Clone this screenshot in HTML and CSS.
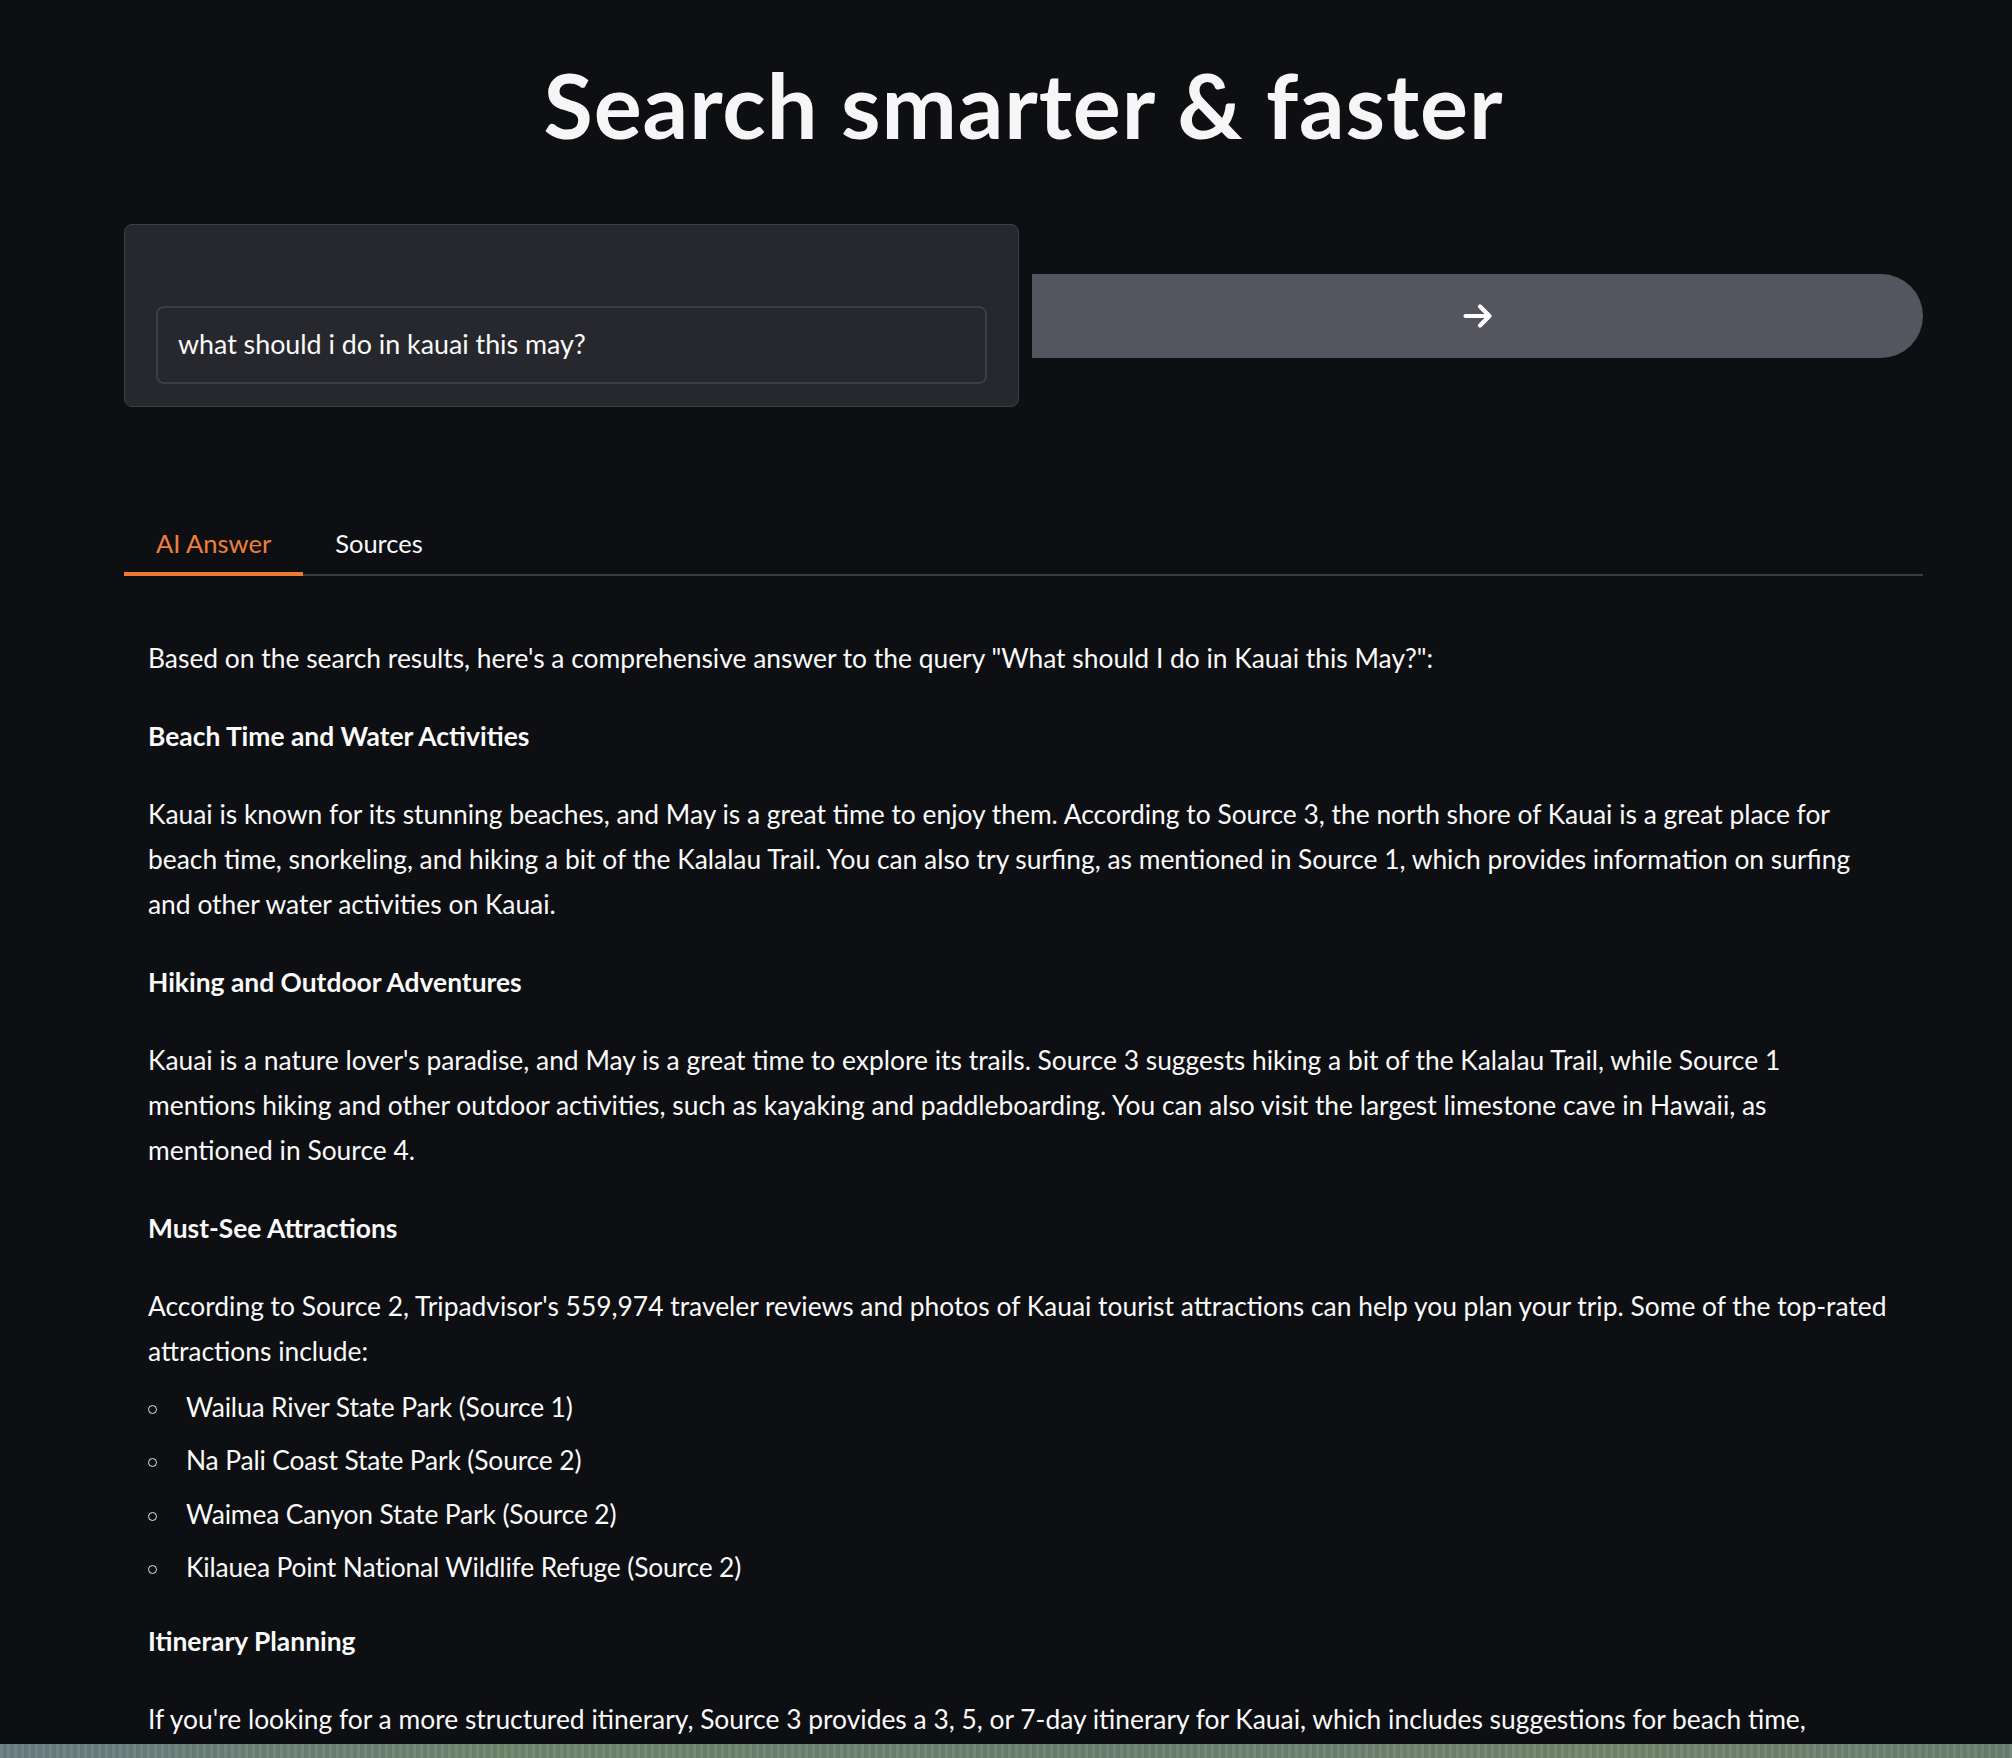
FILE: index.html
```html
<!DOCTYPE html>
<html lang="en">
<head>
<meta charset="utf-8">
<title>Search smarter &amp; faster</title>
<link rel="stylesheet" href="styles.css">
</head>
<body>
<div class="viewport">
  <main class="page">
    <h1 class="title">Search smarter &amp; faster</h1>

    <section class="search-row">
      <div class="search-box">
        <div class="search-input">what should i do in kauai this may?</div>
      </div>
      <button class="search-btn" type="button" aria-label="Search">
        <svg class="arrow" width="32" height="26" viewBox="0 0 32 26" aria-hidden="true">
          <path d="M3.5 13 H27.5 M18 3.5 L27.5 13 L18 22.5" fill="none" stroke="#ffffff" stroke-width="4.2" stroke-linecap="round" stroke-linejoin="round"/>
        </svg>
      </button>
    </section>

    <nav class="tabs">
      <div class="tab active">AI Answer</div>
      <div class="tab">Sources</div>
    </nav>

    <article class="answer">
      <p>Based on the search results, here's a comprehensive answer to the query "What should I do in Kauai this May?":</p>
      <p class="heading">Beach Time and Water Activities</p>
      <p>Kauai is known for its stunning beaches, and May is a great time to enjoy them. According to Source 3, the north shore of Kauai is a great place for<br>beach time, snorkeling, and hiking a bit of the Kalalau Trail. You can also try surfing, as mentioned in Source 1, which provides information on surfing<br>and other water activities on Kauai.</p>
      <p class="heading">Hiking and Outdoor Adventures</p>
      <p>Kauai is a nature lover's paradise, and May is a great time to explore its trails. Source 3 suggests hiking a bit of the Kalalau Trail, while Source 1<br>mentions hiking and other outdoor activities, such as kayaking and paddleboarding. You can also visit the largest limestone cave in Hawaii, as<br>mentioned in Source 4.</p>
      <p class="heading">Must-See Attractions</p>
      <p class="lead">According to Source 2, Tripadvisor's 559,974 traveler reviews and photos of Kauai tourist attractions can help you plan your trip. Some of the top-rated<br>attractions include:</p>
      <ul class="list">
        <li>Wailua River State Park (Source 1)</li>
        <li>Na Pali Coast State Park (Source 2)</li>
        <li>Waimea Canyon State Park (Source 2)</li>
        <li>Kilauea Point National Wildlife Refuge (Source 2)</li>
      </ul>
      <p class="heading">Itinerary Planning</p>
      <p>If you're looking for a more structured itinerary, Source 3 provides a 3, 5, or 7-day itinerary for Kauai, which includes suggestions for beach time,</p>
    </article>
  </main>
</div>
<div class="desktop-strip"></div>
</body>
</html>
```

FILE: styles.css
```css
html, body {
  margin: 0;
  padding: 0;
  height: 100%;
  overflow: hidden;
  background: #0e0f12;
}

body {
  font-family: "Lato", "Noto Sans", sans-serif;
  color: #fafafa;
  display: flex;
  flex-direction: column;
}

.viewport {
  height: 1744px;
  flex: 0 0 1744px;
  overflow: hidden;
}

.page {
  width: 1799px;
  margin-left: 124px;
}

.title {
  margin: 0;
  padding-top: 50px;
  font-size: 90px;
  line-height: 1.2;
  font-weight: 700;
  text-align: center;
  color: #f6f6f6;
  letter-spacing: 0.9px;
}

.search-row {
  display: flex;
  align-items: center;
  gap: 13px;
  margin-top: 66px;
}

.search-box {
  box-sizing: border-box;
  width: 895px;
  height: 183px;
  background: #27282d;
  border: 1px solid #3f4047;
  border-radius: 8px;
  padding: 81px 31px 0 31px;
}

.search-input {
  box-sizing: border-box;
  height: 78px;
  border: 2px solid #3c3d45;
  border-radius: 8px;
  background: #27282d;
  display: flex;
  align-items: center;
  padding: 0 0 2px 20px;
  font-size: 26.8px;
  color: #fafafa;
}

.search-btn {
  width: 891px;
  height: 84px;
  border: none;
  border-radius: 0 42px 42px 0;
  background: #54555f;
  display: flex;
  align-items: center;
  justify-content: center;
  padding: 0;
}

.arrow {
  display: block;
}

.tabs {
  display: flex;
  margin-top: 114px;
  box-shadow: inset 0 -2px 0 #3a3b44;
}

.tab {
  font-size: 25.5px;
  line-height: 45px;
  padding: 0 32px 10px 32px;
  color: #fafafa;
}

.tab.active {
  color: #ef7f38;
  box-shadow: inset 0 -4px 0 #ee7a32;
}

.answer {
  padding: 59.5px 0 0 24px;
  font-size: 26.4px;
  line-height: 45px;
}

.answer p {
  margin: 0 0 33px 0;
  white-space: nowrap;
}

.answer .heading {
  font-weight: 700;
}

.answer .lead {
  margin-bottom: 11px;
}

.list {
  list-style: none;
  margin: 0 0 29px 0;
  padding: 0;
}

.list li {
  position: relative;
  padding-left: 38px;
  margin-bottom: 8.5px;
  white-space: nowrap;
  letter-spacing: -0.15px;
}

.list li::before {
  content: "";
  position: absolute;
  left: 0;
  top: 20px;
  width: 9px;
  height: 9px;
  box-sizing: border-box;
  border: 1.4px solid #e8e8e8;
  border-radius: 50%;
}

.desktop-strip {
  flex: 0 0 14px;
  height: 14px;
  background:
    repeating-linear-gradient(90deg, rgba(255,255,255,0.04) 0 3px, rgba(0,0,0,0.05) 3px 7px),
    linear-gradient(90deg, #6a7f84 0%, #71866f 25%, #6e8272 55%, #74876f 80%, #6d8070 100%);
}
```
